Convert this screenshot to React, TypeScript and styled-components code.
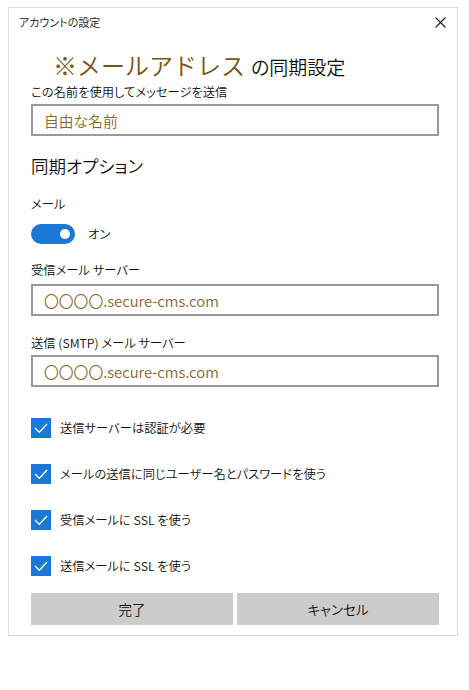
import React from "react";
import styled, { createGlobalStyle } from "styled-components";

const Global = createGlobalStyle`
  html, body { margin: 0; padding: 0; background: #ffffff; }
  body {
    font-family: "Noto Sans CJK JP", "Noto Sans", sans-serif;
    font-weight: 350;
    color: #111111;
    font-feature-settings: "palt";
  }
  * { box-sizing: border-box; }
`;

const Dialog = styled.div`
  width: 450px;
  margin: 7px 0 0 8px;
  border: 1px solid #dadada;
  background: #ffffff;
`;

const TitleBar = styled.div`
  height: 28px;
  display: flex;
  align-items: center;
  justify-content: space-between;
  padding: 0 11px 0 10px;
`;

const Title = styled.div`
  font-size: 11px;
  line-height: 16px;
`;

const CloseBtn = styled.button`
  width: 12px;
  height: 12px;
  padding: 0;
  border: none;
  background: none;
  display: flex;
  align-items: center;
  justify-content: center;
  margin-top: 1px;
`;

const Body = styled.div`
  padding: 0 18px 10px 22px;
  display: flex;
  flex-direction: column;
`;

const Heading = styled.div`
  height: 30px;
  line-height: 30px;
  margin-top: 14px;
  padding-left: 22px;
  white-space: nowrap;
`;

const Accent = styled.span`
  font-size: 24px;
  color: #7a5513;
  font-feature-settings: normal;
`;

const HeadingRest = styled.span`
  font-size: 19px;
  margin-left: 6px;
`;

const Label = styled.div<{ $mt: number }>`
  font-size: 12.3px;
  line-height: 18px;
  margin-top: ${(p) => p.$mt}px;
  white-space: nowrap;
`;

const SectionTitle = styled.div`
  font-size: 17.5px;
  line-height: 26px;
  margin-top: 17px;
`;

const Input = styled.div<{ $mt: number }>`
  height: 32px;
  width: 408px;
  margin-top: ${(p) => p.$mt}px;
  border: 2px solid #999999;
  display: flex;
  align-items: center;
  padding-left: 11px;
  font-size: 14.8px;
  color: #8a672c;
  white-space: nowrap;
`;

const ToggleRow = styled.div`
  display: flex;
  align-items: center;
  gap: 13px;
  margin-top: 11px;
  height: 20px;
  font-size: 12.3px;
`;

const Track = styled.div`
  width: 44px;
  height: 20px;
  border-radius: 10px;
  background: #1a78d6;
  display: flex;
  align-items: center;
  justify-content: flex-end;
  padding-right: 5px;
`;

const Knob = styled.div`
  width: 10px;
  height: 10px;
  border-radius: 50%;
  background: #ffffff;
`;

const CheckList = styled.div`
  display: flex;
  flex-direction: column;
  gap: 26px;
  margin-top: 31px;
`;

const CheckRow = styled.div`
  display: flex;
  align-items: center;
  gap: 9px;
  height: 20px;
  font-size: 12.3px;
  white-space: nowrap;
`;

const Box = styled.div`
  width: 20px;
  height: 20px;
  background: #1a78d6;
  display: flex;
  align-items: center;
  justify-content: center;
  flex-shrink: 0;
`;

const Buttons = styled.div`
  display: grid;
  grid-template-columns: 202px 202px;
  gap: 4px;
  margin-top: 17px;
`;

const Button = styled.button`
  height: 32px;
  border: none;
  background: #cccccc;
  font-family: inherit;
  font-weight: 350;
  font-size: 13.5px;
  color: #111111;
  padding: 0;
  font-feature-settings: "palt";
`;

const Check = () => (
  <svg width="20" height="20" viewBox="0 0 20 20">
    <polyline points="4,10 8.3,14.2 16,6" fill="none" stroke="#ffffff" strokeWidth="1.3" />
  </svg>
);

const checks = [
  "送信サーバーは認証が必要",
  "メールの送信に同じユーザー名とパスワードを使う",
  "受信メールに SSL を使う",
  "送信メールに SSL を使う",
];

export default function App() {
  return (
    <>
      <Global />
      <Dialog>
        <TitleBar>
          <Title>アカウントの設定</Title>
          <CloseBtn aria-label="閉じる">
            <svg width="11" height="11" viewBox="0 0 11 11">
              <path d="M0.5 0.5 L10.5 10.5 M10.5 0.5 L0.5 10.5" stroke="#1a1a1a" strokeWidth="1.1" />
            </svg>
          </CloseBtn>
        </TitleBar>
        <Body>
          <Heading>
            <Accent>※メールアドレス</Accent>
            <HeadingRest>の同期設定</HeadingRest>
          </Heading>
          <Label $mt={3}>この名前を使用してメッセージを送信</Label>
          <Input $mt={3}>自由な名前</Input>
          <SectionTitle>同期オプション</SectionTitle>
          <Label $mt={16}>メール</Label>
          <ToggleRow>
            <Track>
              <Knob />
            </Track>
            <span>オン</span>
          </ToggleRow>
          <Label $mt={17}>受信メール サーバー</Label>
          <Input $mt={5}>〇〇〇〇.secure-cms.com</Input>
          <Label $mt={18}>送信 (SMTP) メール サーバー</Label>
          <Input $mt={3}>〇〇〇〇.secure-cms.com</Input>
          <CheckList>
            {checks.map((c) => (
              <CheckRow key={c}>
                <Box>
                  <Check />
                </Box>
                <span>{c}</span>
              </CheckRow>
            ))}
          </CheckList>
          <Buttons>
            <Button>完了</Button>
            <Button>キャンセル</Button>
          </Buttons>
        </Body>
      </Dialog>
    </>
  );
}
